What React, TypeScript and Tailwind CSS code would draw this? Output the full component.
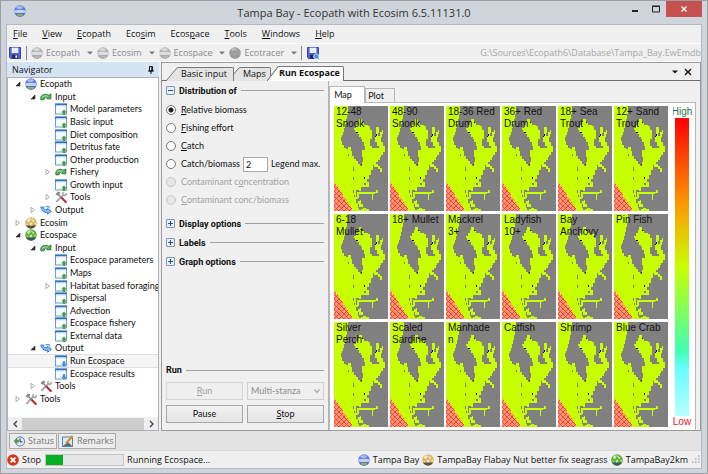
import { useState } from "react";
import type { ReactNode } from "react";

type Tone = "blue" | "gold" | "green" | "gray" | "darkgray";
type IconName = "ecopath" | "ecosim" | "ecospace" | "input" | "output" | "sheetIn" | "sheetOut" | "tools";

const tones: Record<Tone, string[]> = {
    blue: ["#5f7fe0", "#c3d4f8", "#4b6c8e"],
    gold: ["#d6b564", "#fbeecb", "#5e5040"],
    green: ["#5fae3f", "#c4eca4", "#3c5a5c"],
    gray: ["#b4b4b4", "#dedede", "#a2a2a2"],
    darkgray: ["#9c9c9c", "#a8a8a8", "#989898"],
};

const Globe = ({ tone }: { tone: Tone }) => {
    const [main, light, dark] = tones[tone];
    return (
        <svg viewBox="0 0 12 12" className="size-3 shrink-0" aria-hidden="true">
            <circle cx="6" cy="6" r="5.8" fill={main} />
            <path d="M0.9 8.6 H11.1 A5.8 5.8 0 0 1 0.9 8.6Z" fill={dark} />
            {tone === "blue" || tone === "gray" ? (
                <>
                    <path d="M0.3 5.6 Q6 4 11.7 5.6 V7.4 Q6 8.6 0.3 7.4Z" fill={light} />
                    <path d="M2.5 8.8 Q6 9.8 9.5 8.8 L8 10.8 H4Z" fill={tone === "blue" ? "#b3bd62" : "#bdbdbd"} />
                    <ellipse cx="5.6" cy="2.6" rx="3.2" ry="1.3" fill="#fff" opacity="0.5" />
                </>
            ) : (
                <>
                    <path d="M2 3 L4.5 1.6 L5 4 L3 5.6Z M6.5 2 L9.5 3.4 L8 5.4Z M4.5 6.2 L7 5.6 L7.4 8 L5 8.6Z M9 6 L11 5.4 L10.4 8Z M1.2 6.6 L3.2 7.4 L2.6 8.6Z" fill={light} />
                    <ellipse cx="5" cy="2.2" rx="2.6" ry="1" fill="#fff" opacity="0.4" />
                </>
            )}
        </svg>
    );
};

const Sheet = ({ down }: { down?: boolean }) => (
    <svg viewBox="0 0 12 12" className="size-3 shrink-0" aria-hidden="true">
        <rect x="0.5" y="1" width="11" height="10" fill="#f8fcff" stroke="#6d9cc8" />
        <rect x="0" y="0.6" width="12" height="1.8" fill="#2f72b8" />
        <rect x="1" y="2.4" width="10" height="1" fill="#c4def4" />
        {down ? (
            <path d="M7.8 6.2 H10.2 V8.8 H11.8 L9 12 L6.2 8.8 H7.8Z" fill="#3c8cf0" />
        ) : (
            <path d="M7.8 12 H10.2 V9.6 H11.8 L9 6.4 L6.2 9.6 H7.8Z" fill="#3f9f3c" />
        )}
    </svg>
);

const InputArrow = () => (
    <svg viewBox="0 0 12 12" className="size-3 shrink-0" aria-hidden="true">
        <path d="M1 9 Q-0.2 5 3.4 3.6 Q6 2.6 8.6 4.2 L11 3 L10.8 8 L6.6 7.6 L7.6 6.2 Q4.6 5.2 4.2 8.6 Z" fill="#55b25a" stroke="#276b33" strokeWidth="0.8" />
        <path d="M2 6.4 Q4 3.8 8 5.2" fill="none" stroke="#b9ecb4" strokeWidth="0.9" />
    </svg>
);

const OutputArrow = () => (
    <svg viewBox="0 0 12 12" className="size-3 shrink-0" aria-hidden="true">
        <path d="M0.8 3 H3.6 L3.8 5 Q4.6 6 7.4 5.8 V4.4 L11.4 7.2 L7.6 10.2 V8.6 Q1.6 8.6 0.8 3Z" fill="#86bfff" stroke="#2f6ee0" strokeWidth="0.9" />
        <path d="M5.4 2.6 H9 L9.4 4.4" fill="none" stroke="#5b96f0" strokeWidth="1.1" />
    </svg>
);

const ToolsIcon = () => (
    <svg viewBox="0 0 12 12" className="size-3 shrink-0" aria-hidden="true">
        <path d="M1.4 10.8 L8 4" stroke="#a4a9af" strokeWidth="1.9" />
        <path d="M11.4 1.6 A2.4 2.4 0 1 1 9 0.6 L8.6 2.6 L9.8 3.2Z" fill="#a9afb5" />
        <path d="M6.6 6.8 L10.8 11" stroke="#c0272d" strokeWidth="2" strokeLinecap="round" />
        <path d="M3.2 3.4 L6.6 6.8" stroke="#777" strokeWidth="1.2" />
        <path d="M0.4 3.2 L3 0.6 L5.4 1.4 L4.4 3.6 L2.6 4.8Z" fill="#868c92" />
    </svg>
);

const Floppy = ({ badge }: { badge?: boolean }) => (
    <svg viewBox="0 0 12 12" className="size-3 shrink-0" aria-hidden="true">
        <path d="M0.5 0.5 H11.5 V11.5 H1.6 L0.5 10.4Z" fill="#5563d2" stroke="#3a46ac" />
        <rect x="2.6" y="0.6" width="6.8" height="5.4" fill="#e8eefc" />
        <rect x="3.2" y="7.8" width="5.4" height="3.6" fill="#1f2550" />
        <rect x="6.4" y="8.4" width="1.6" height="2.4" fill="#fff" />
        {badge && <circle cx="9.4" cy="9.4" r="2.5" fill="#3f93dc" stroke="#d9ecfb" strokeWidth="0.8" />}
    </svg>
);

const NodeIcon = ({ name }: { name: IconName }) => {
    if (name === "ecopath") return <Globe tone="blue" />;
    if (name === "ecosim") return <Globe tone="gold" />;
    if (name === "ecospace") return <Globe tone="green" />;
    if (name === "input") return <InputArrow />;
    if (name === "output") return <OutputArrow />;
    if (name === "tools") return <ToolsIcon />;
    return <Sheet down={name === "sheetOut"} />;
};

const menus = [
    ["", "F", "ile"],
    ["", "V", "iew"],
    ["", "E", "copath"],
    ["Eco", "s", "im"],
    ["Ecos", "p", "ace"],
    ["", "T", "ools"],
    ["", "W", "indows"],
    ["", "H", "elp"],
];

const toolButtons: { label: string; tone: Tone }[] = [
    { label: "Ecopath", tone: "gray" },
    { label: "Ecosim", tone: "gray" },
    { label: "Ecospace", tone: "gray" },
    { label: "Ecotracer", tone: "darkgray" },
];

const nodes: { label: string; level: number; icon: IconName; state?: "open" | "closed" }[] = [
    { label: "Ecopath", level: 0, icon: "ecopath", state: "open" },
    { label: "Input", level: 1, icon: "input", state: "open" },
    { label: "Model parameters", level: 2, icon: "sheetIn" },
    { label: "Basic input", level: 2, icon: "sheetIn" },
    { label: "Diet composition", level: 2, icon: "sheetIn" },
    { label: "Detritus fate", level: 2, icon: "sheetIn" },
    { label: "Other production", level: 2, icon: "sheetIn" },
    { label: "Fishery", level: 2, icon: "input", state: "closed" },
    { label: "Growth input", level: 2, icon: "sheetIn" },
    { label: "Tools", level: 2, icon: "tools", state: "closed" },
    { label: "Output", level: 1, icon: "output", state: "closed" },
    { label: "Ecosim", level: 0, icon: "ecosim", state: "closed" },
    { label: "Ecospace", level: 0, icon: "ecospace", state: "open" },
    { label: "Input", level: 1, icon: "input", state: "open" },
    { label: "Ecospace parameters", level: 2, icon: "sheetIn" },
    { label: "Maps", level: 2, icon: "sheetIn" },
    { label: "Habitat based foraging", level: 2, icon: "sheetIn", state: "closed" },
    { label: "Dispersal", level: 2, icon: "sheetIn" },
    { label: "Advection", level: 2, icon: "sheetIn" },
    { label: "Ecospace fishery", level: 2, icon: "sheetIn" },
    { label: "External data", level: 2, icon: "sheetIn" },
    { label: "Output", level: 1, icon: "output", state: "open" },
    { label: "Run Ecospace", level: 2, icon: "sheetOut" },
    { label: "Ecospace results", level: 2, icon: "sheetOut" },
    { label: "Tools", level: 1, icon: "tools", state: "closed" },
    { label: "Tools", level: 0, icon: "tools", state: "closed" },
];

const indents = ["pl-1.5", "pl-[21px]", "pl-9"];

const species = [
    "12-48\nSnook", "48-90\nSnook", "18-36 Red\nDrum", "36+ Red\nDrum", "18+ Sea\nTrout", "12+ Sand\nTrout",
    "6-18\nMullet", "18+ Mullet", "Mackrel\n3+", "Ladyfish\n10+", "Bay\nAnchovy", "Pin Fish",
    "Silver\nPerch", "Scaled\nSardine", "Manhade\nn", "Catfish", "Shrimp", "Blue Crab",
];

const Navigator = () => (
    <aside className="flex w-[152px] shrink-0 flex-col">
        <div className="flex h-[15px] items-center justify-between bg-[#d5e4f2] pl-[5px] pr-1">
            <h2 className="font-['Open_Sans',sans-serif]">Navigator</h2>
            <button aria-label="Pin">
                <svg viewBox="0 0 8 8" className="size-2">
                    <path d="M2.5 0.5 H5.5 V5 H2.5Z M1 5 H7 M4 5 V8 M4.8 0.5 V5" fill="none" stroke="#111" />
                </svg>
            </button>
        </div>
        <div className="flex flex-1 flex-col overflow-hidden border border-[#a9b0b8] bg-white">
            <ul className="flex h-[327px] flex-col">
                {nodes.map((n, i) => (
                    <li
                        key={i}
                        className={`flex min-h-0 flex-1 items-center ${indents[n.level]} ${n.label === "Run Ecospace" ? "bg-[#f5f5f5] outline outline-[#dedede]" : ""}`}
                    >
                        <svg viewBox="0 0 8 8" className="mr-[3px] size-2 shrink-0" aria-hidden="true">
                            {n.state === "open" && <path d="M6 2 V6 H2Z" fill="#333" stroke="#222" strokeWidth="0.6" />}
                            {n.state === "closed" && <path d="M2 1.4 L5.4 4 L2 6.6Z" fill="#fff" stroke="#999" strokeWidth="0.8" />}
                        </svg>
                        <NodeIcon name={n.icon} />
                        <span className="ml-[3px] whitespace-nowrap">{n.label}</span>
                    </li>
                ))}
            </ul>
            <div className="mt-auto flex h-[13px] items-center bg-[#f0f0f0]">
                <svg viewBox="0 0 14 12" className="h-3 w-3.5"><path d="M9 3 L6 6 L9 9" fill="none" stroke="#444" strokeWidth="1.4" /></svg>
                <div className="h-3 flex-1 bg-[#cdcdcd]" />
                <svg viewBox="0 0 14 12" className="h-3 w-3.5"><path d="M6 3 L9 6 L6 9" fill="none" stroke="#444" strokeWidth="1.4" /></svg>
            </div>
        </div>
    </aside>
);

const DocTab = ({ label, active, place }: { label: string; active?: boolean; place: string }) => (
    <button
        role="tab"
        aria-selected={active ? true : false}
        className={`flex items-stretch ${place} ${active ? "h-[15px] font-bold" : "h-[14px]"}`}
    >
        <svg viewBox="0 0 13 14" preserveAspectRatio="none" className="h-full w-[13px] shrink-0" aria-hidden="true">
            <path d="M0 14 L10 2 Q11 0.5 13 0.5 V14Z" fill={active ? "#fff" : "#e4e4e4"} />
            <path d="M0 14 L10 2 Q11 0.5 13 0.5" fill="none" stroke="#777" />
        </svg>
        <span className={`-ml-px flex-1 whitespace-nowrap rounded-tr-[2px] border-r border-t border-[#777] text-left leading-[12px] ${active ? "bg-white" : "bg-[#e4e4e4] pl-[3px]"}`}>
            {label}
        </span>
    </button>
);

const Section = ({ title, open }: { title: string; open?: boolean }) => (
    <h3 className="flex h-[19px] items-center font-['Roboto',sans-serif] font-bold">
        <button aria-label={title} aria-expanded={open ? true : false} className="mr-1 flex size-[9px] shrink-0 items-center justify-center rounded-[1px] border border-[#7c97bd] bg-[#e8f0fb]">
            <svg viewBox="0 0 5 5" className="size-[5px] shrink-0">
                <path d={open ? "M0 2.5 H5" : "M0 2.5 H5 M2.5 0 V5"} stroke="#2b4f94" />
            </svg>
        </button>
        <span className="mr-1">{title}</span>
        <span className="h-px flex-1 bg-[#a0a0a0]" />
    </h3>
);

const Radio = ({ id, children, value, onPick, disabled }: { id: string; children: ReactNode; value: string; onPick: (v: string) => void; disabled?: boolean }) => (
    <label className={`flex h-[18px] items-center whitespace-nowrap ${disabled ? "text-[#a3a3a3]" : ""}`}>
        <input
            type="radio"
            name="distribution"
            checked={value === id}
            disabled={disabled}
            onChange={() => onPick(id)}
            className="mr-[5px] size-[10px] shrink-0 appearance-none rounded-full border border-[#777] bg-white checked:bg-[radial-gradient(circle,#222_0_2px,#fff_3px)] disabled:border-[#c8c8c8] disabled:bg-[#e6e6e6]"
        />
        {children}
    </label>
);

const OptionsPanel = () => {
    const [value, setValue] = useState("biomass");

    return (
        <section className="flex w-[167px] shrink-0 flex-col border-r border-[#b4b4b4] pl-1 pr-1">
            <Section title="Distribution of" open />
            <div className="mb-[5px] mt-px flex flex-col">
                <Radio id="biomass" value={value} onPick={setValue}><span><u>R</u>elative biomass</span></Radio>
                <Radio id="effort" value={value} onPick={setValue}><span><u>F</u>ishing effort</span></Radio>
                <Radio id="catch" value={value} onPick={setValue}><span><u>C</u>atch</span></Radio>
                <div className="flex items-center">
                    <Radio id="ratio" value={value} onPick={setValue}>Catch/biomass</Radio>
                    <input id="legend-max" defaultValue="2" className="ml-[3px] h-[15px] w-[25px] border border-[#aaa] bg-white px-0.5" />
                    <label htmlFor="legend-max" className="ml-[3px] whitespace-nowrap">Legend max.</label>
                </div>
                <Radio id="conc" value={value} onPick={setValue} disabled><span>Contaminant c<u>o</u>ncentration</span></Radio>
                <Radio id="concBio" value={value} onPick={setValue} disabled><span><u>C</u>ontaminant conc/biomass</span></Radio>
            </div>
            <Section title="Display options" />
            <Section title="Labels" />
            <Section title="Graph options" />

            <h3 className="mt-auto flex items-center font-['Roboto',sans-serif] font-bold leading-4">
                <span className="mr-1">Run</span>
                <span className="h-px flex-1 bg-[#a0a0a0]" />
            </h3>
            <div className="mb-[7px] mt-1 grid grid-cols-2 gap-x-1 gap-y-[5px]">
                <button disabled className="h-[18px] border border-[#d4d4d4] bg-[#efefef] text-[#a0a0a0]"><u>R</u>un</button>
                <div className="relative">
                    <select disabled aria-label="Run mode" className="h-[18px] w-full appearance-none border border-[#d0d0d0] bg-[#efefef] pl-[3px] text-[#8c8c8c] opacity-100">
                        <option>Multi-stanza</option>
                    </select>
                    <svg viewBox="0 0 6 6" className="pointer-events-none absolute right-1 top-1.5 size-1.5" aria-hidden="true"><path d="M0.5 1.5 L3 4.5 L5.5 1.5" fill="none" stroke="#aaa" strokeWidth="1.2" /></svg>
                </div>
                <button className="h-[18px] border border-[#a6a6a6] bg-linear-to-b from-[#f2f2f2] to-[#e4e4e4]">Pause</button>
                <button className="h-[18px] border border-[#a6a6a6] bg-linear-to-b from-[#f2f2f2] to-[#e4e4e4]"><u>S</u>top</button>
            </div>
        </section>
    );
};

// shared bay outline, used once per species
const BayDefs = () => (
    <svg className="absolute size-0" aria-hidden="true">
        <defs>
            <pattern id="hatch" width="5" height="5" patternUnits="userSpaceOnUse">
                <rect width="5" height="5" fill="#ff9c78" />
                <path d="M0 0 L5 5 M5 0 L0 5" stroke="#ff2a24" strokeWidth="0.8" shapeRendering="auto" />
            </pattern>
            <g id="bay">
                <rect width="54" height="105" fill="#808080" />
                <path
                    fill="#c8ff00"
                    d="M0 0 H14 V8 H13 V13 H12 V18 H11 V22 H10 V26 H9 V29 H8 V31 H7 V35 H8 V39 H10 V42 H12 V43 H14 V41 H17 V45 H18 V50 H20 V53 H22 V55 H24 V58 H26 V60 H28 V56 H29 V51 H28 V44 H31 V40 H30 V36 H28 V33 H27 V31 H25 V28 H23 V26 H21 V24 H20 V22 H22 V19 H24 V16 H25 V13 H28 V17 H30 V19 H34 V20 H36 V24 H38 V33 H36 V40 H38 V42 H45 V40 H43 V36 H41 V30 H42 V21 H45 V27 H44 V30 H46 V26 H48 V24 H49 V28 H48 V31 H47 V36 H49 V40 H51 V46 H49 V49 H47 V51 H46 V54 H44 V56 H42 V58 H44 V60 H46 V62 H48 V66 H46 V63 H44 V61 H40 V59 H39 V64 H37 V69 H35 V73 H33 V76 H35 V81 H29 V79 H32 V77 H30 V81 H27 V85 H25 V86 H42 V84 H44 V87 H41 V88 H39 V94 H38 V88 H25 V94 H27 V98 H29 V102 H32 V103 H35 V105 H0Z"
                />
                <path fill="#808080" d="M14 48 H15 V50 H14Z M19 61 H20 V65 H19Z M19 71 H20 V74 H19Z M19 84 H20 V87 H19Z M22 84 H25 V86 H23 V91 H22Z M20 89 H21 V91 H20Z M22 93 H24 V92 H26 V95 H24 V97 H22Z M24 98 H25 V101 H27 V104 H25 V102 H24Z M27 101 H29 V103 H27Z" />
                <path fill="#111" d="M22 26 H24 V27 H22Z M42 28 H43 V30 H42Z M41 30 H42 V31 H41Z M27 58 H28 V59 H27Z M30 71 H31 V73 H30Z M28 16 H29 V17 H28Z" />
                <path fill="url(#hatch)" d="M0 76 H1 V78 H2 V80 H4 V82 H5 V84 H6 V86 H8 V88 H9 V91 H11 V93 H12 V96 H14 V98 H15 V100 H17 V102 H18 V105 H0Z" />
            </g>
        </defs>
    </svg>
);

const SpeciesMap = ({ name }: { name: string }) => (
    <figure className="relative aspect-[54/105]">
        <svg viewBox="0 0 54 105" preserveAspectRatio="none" shapeRendering="crispEdges" className="size-full" aria-hidden="true">
            <use href="#bay" />
        </svg>
        <figcaption className="absolute inset-x-0 top-0 whitespace-pre pl-0.5 font-['Liberation_Sans',Arial,sans-serif] text-[10px] leading-[12px] text-[#111]">{name}</figcaption>
    </figure>
);

const ResultPanel = () => (
    <section className="flex min-w-0 flex-1 flex-col pr-1 pt-[5px]">
        <div role="tablist" className="z-10 flex items-end">
            <button role="tab" aria-selected="true" className="-mb-px h-[17px] w-9 border border-b-0 border-[#b8b8b8] bg-white pr-2">Map</button>
            <button role="tab" aria-selected="false" className="h-[14px] w-[30px] border border-b-0 border-[#b8b8b8] bg-[#f0f0f0] pr-2">Plot</button>
        </div>
        <div className="flex flex-1 border border-b-0 border-[#b8b8b8] bg-white pl-1 pt-[3px]">
            <BayDefs />
            <div className="grid flex-1 grid-cols-6 content-start gap-x-0.5 gap-y-[3px]">
                {species.map((name) => (
                    <SpeciesMap key={name} name={name} />
                ))}
            </div>
            <div className="mb-0.5 ml-[3px] mr-0.5 flex w-[22px] flex-col items-center font-['Liberation_Sans',Arial,sans-serif] text-[10px] leading-[12px]">
                <span className="flex w-[19px] justify-center overflow-hidden text-[#2f7050]">High</span>
                <div className="w-3.5 flex-1 bg-[linear-gradient(#ff0000,#ff9900_29%,#c8ff00_50%,#40ffb0_78%,#66ffff_84%,#b8ffff)]" />
                <span className="flex w-[19px] justify-center overflow-hidden text-[#e02030]">Low</span>
            </div>
        </div>
    </section>
);

const App = () => (
    <div className="flex min-h-screen flex-col border border-[#9ba0a6] bg-[#d0d5db] pb-1 pl-[5px] pr-[5px] font-['Lato',Arial,sans-serif] text-[9px] leading-[12px] text-[#111]">
        <header className="relative flex h-[23px] shrink-0 items-center justify-center font-['Open_Sans',sans-serif]">
            <span className="absolute left-2 top-1"><Globe tone="blue" /></span>
            <h1 className="text-[11px] text-[#333]">Tampa Bay - Ecopath with Ecosim 6.5.11131.0</h1>
            <div className="absolute right-0 top-0 flex h-4">
                <button aria-label="Minimize" className="w-[21px]"><svg viewBox="0 0 21 16"><path d="M8 10 H14" stroke="#222" strokeWidth="2" /></svg></button>
                <button aria-label="Maximize" className="w-[21px]"><svg viewBox="0 0 21 16"><path d="M7.5 5.5 H14.5 V11 H7.5Z M7 5 H15" fill="none" stroke="#222" /></svg></button>
                <button aria-label="Close" className="w-9 bg-[#c75050]"><svg viewBox="0 0 36 16"><path d="M15.5 5.5 L20.5 10.5 M20.5 5.5 L15.5 10.5" stroke="#fff" strokeWidth="1.4" /></svg></button>
            </div>
        </header>

        <div className="flex flex-1 flex-col border border-[#b4bac2] bg-[#f0f0f0]">
            <nav className="flex h-[19px] items-center gap-[15px] border-b border-white pl-1.5 font-['Open_Sans',sans-serif]">
                {menus.map(([pre, key, rest]) => (
                    <button key={pre + key + rest}>{pre}<u>{key}</u>{rest}</button>
                ))}
            </nav>

            <div className="flex h-[18px] items-center border-b border-white pl-0.5 font-['Open_Sans',sans-serif] text-[#8a8a8a]">
                <button aria-label="Save"><Floppy /></button>
                <span className="ml-[5px] mr-1 h-[14px] w-px bg-[#888]" />
                {toolButtons.map((b) => (
                    <button key={b.label} className="mr-1 flex items-center">
                        <Globe tone={b.tone} />
                        <span className="ml-[3px] mr-[7px]">{b.label}</span>
                        <svg viewBox="0 0 6 4" className="h-1 w-1.5"><path d="M0 0.5 H6 L3 3.5Z" fill="#777" /></svg>
                    </button>
                ))}
                <span className="mr-[5px] h-[14px] w-px bg-[#888]" />
                <button aria-label="Save results"><Floppy badge /></button>
                <span className="ml-auto text-[#a8a8a8]">G:\Sources\Ecopath6\Database\Tampa_Bay.EwEmdb</span>
            </div>

            <div className="flex flex-1 gap-0.5">
                <Navigator />
                <main className="flex min-w-0 flex-1 flex-col border border-[#9a9a9a]">
                    <div className="flex h-[18px] items-end border-b border-[#6e696e] pl-1 font-['Open_Sans',sans-serif]">
                        <div role="tablist" className="-mb-px flex items-end">
                            <DocTab label="Basic input" place="z-10 w-[68px]" />
                            <DocTab label="Maps" place="-ml-1.5 w-[43px]" />
                            <DocTab label="Run Ecospace" active place="z-10 -ml-1 w-[77px]" />
                        </div>
                        <div className="mb-1 ml-auto mr-2 flex items-center gap-1.5">
                            <button aria-label="Window list"><svg viewBox="0 0 6 4" className="h-1 w-1.5"><path d="M0 0.5 H6 L3 3.5Z" fill="#111" /></svg></button>
                            <button aria-label="Close tab"><svg viewBox="0 0 8 8" className="size-2"><path d="M1 1 L7 7 M7 1 L1 7" stroke="#111" strokeWidth="1.4" /></svg></button>
                        </div>
                    </div>
                    <div className="flex flex-1">
                        <OptionsPanel />
                        <ResultPanel />
                    </div>
                </main>
            </div>

            <div className="flex h-[19px] items-start gap-px bg-[#e3e3e3] pl-0.5 pt-0.5 font-['Open_Sans',sans-serif] text-[#777]">
                <button className="flex h-4 w-12 items-center gap-[3px] border border-[#aaa] bg-[#ececec] pl-[3px]">
                    <svg viewBox="0 0 12 12" className="size-3 shrink-0"><circle cx="7" cy="6.5" r="4.6" fill="#dfe7f8" stroke="#5f78bd" /><path d="M7 3.5 V6.8 H9.4" fill="none" stroke="#334" /><path d="M0.5 6 L4 3 V4.8 H6 V7.4 H4 V9Z" fill="#4da045" /></svg>
                    Status
                </button>
                <button className="flex h-4 w-[58px] items-center gap-[3px] border border-[#aaa] bg-[#ececec] pl-[3px]">
                    <svg viewBox="0 0 12 12" className="size-3 shrink-0"><rect x="0.5" y="2" width="10" height="9.5" fill="#dbe9f6" stroke="#5580a8" /><path d="M1 11 L6 7 L10 11Z" fill="#58697c" /><path d="M4 8.5 L10.6 1" stroke="#d98a2b" strokeWidth="2" /></svg>
                    Remarks
                </button>
            </div>

            <footer className="flex h-[18px] items-center border-t border-[#dadada] font-['Open_Sans',sans-serif]">
                <button className="flex items-center gap-[3px]">
                    <svg viewBox="0 0 12 12" className="size-3"><circle cx="6" cy="6" r="5.8" fill="#cf3a1c" /><path d="M3.6 3.6 L8.4 8.4 M8.4 3.6 L3.6 8.4" stroke="#fff" strokeWidth="1.9" /></svg>
                    Stop
                </button>
                <div role="progressbar" aria-label="Run progress" aria-valuenow={22} className="ml-1 mr-[3px] h-3 w-[79px] border border-[#c4c4c4] bg-[#e6e6e6]">
                    <div className="h-full w-[22%] bg-[#06b025]" />
                </div>
                <span>Running Ecospace...</span>
                <div className="ml-auto mr-px flex items-center gap-[3px] whitespace-nowrap">
                    <Globe tone="blue" />Tampa Bay
                    <Globe tone="gold" />TampaBay Flabay Nut better fix seagrass
                    <Globe tone="green" />TampaBay2km
                    <svg viewBox="0 0 9 9" className="size-[9px]"><path d="M7 1 H8.5 M4 4 H5.5 M7 4 H8.5 M1 7 H2.5 M4 7 H5.5 M7 7 H8.5" stroke="#aaa" strokeWidth="1.5" /></svg>
                </div>
            </footer>
        </div>
    </div>
);

export default App;
